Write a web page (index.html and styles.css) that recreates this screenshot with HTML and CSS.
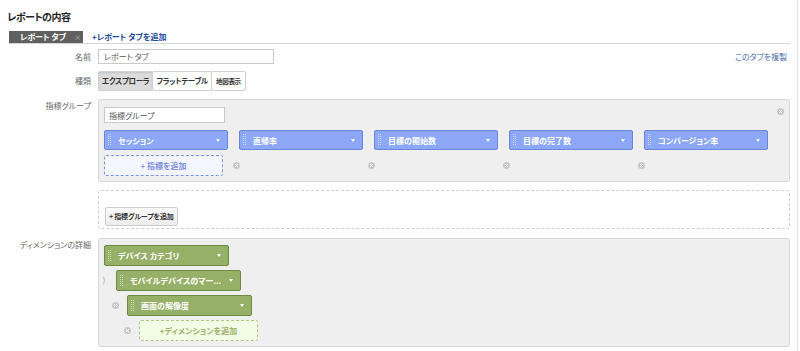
FILE: index.html
```html
<!DOCTYPE html>
<html lang="ja">
<head>
<meta charset="utf-8">
<title>レポートの内容</title>
<link rel="stylesheet" href="styles.css">
</head>
<body>
<div class="page">
  <h1 class="title">レポートの内容</h1>
  <div class="tabs">
    <div class="tab"><span>レポート タブ</span><span class="tab-x">×</span></div>
    <a class="add-tab">+レポート タブを追加</a>
  </div>

  <div class="form">
    <div class="label label-mid">名前</div>
    <div class="field name-field">
      <div class="input name-input">レポート タブ</div>
      <a class="copy">このタブを複製</a>
    </div>

    <div class="label label-mid row-type">種類</div>
    <div class="field row-type">
      <div class="btngroup">
        <div class="btn sel">エクスプローラ</div>
        <div class="btn">フラットテーブル</div>
        <div class="btn small">地図表示</div>
      </div>
    </div>

    <div class="label label-top row-metrics">指標グループ</div>
    <div class="field row-metrics">
      <div class="panel metrics">
        <svg class="close panel-close" viewBox="0 0 7 7"><circle cx="3.5" cy="3.5" r="3.5"/><path d="M2 2L5 5M5 2L2 5"/></svg>
        <div class="input group-input">指標グループ</div>
        <div class="metric-grid">
          <div class="chip blue"><i class="grip"></i><span>セッション</span><i class="caret"></i></div>
          <div class="chip blue"><i class="grip"></i><span>直帰率</span><i class="caret"></i></div>
          <div class="chip blue"><i class="grip"></i><span>目標の開始数</span><i class="caret"></i></div>
          <div class="chip blue"><i class="grip"></i><span>目標の完了数</span><i class="caret"></i></div>
          <div class="chip blue"><i class="grip"></i><span>コンバージョン率</span><i class="caret"></i></div>
          <div class="add-box blue-add">+ 指標を追加</div>
          <svg class="close col-close" viewBox="0 0 7 7"><circle cx="3.5" cy="3.5" r="3.5"/><path d="M2 2L5 5M5 2L2 5"/></svg>
          <svg class="close col-close" viewBox="0 0 7 7"><circle cx="3.5" cy="3.5" r="3.5"/><path d="M2 2L5 5M5 2L2 5"/></svg>
          <svg class="close col-close" viewBox="0 0 7 7"><circle cx="3.5" cy="3.5" r="3.5"/><path d="M2 2L5 5M5 2L2 5"/></svg>
          <svg class="close col-close" viewBox="0 0 7 7"><circle cx="3.5" cy="3.5" r="3.5"/><path d="M2 2L5 5M5 2L2 5"/></svg>
        </div>
      </div>
    </div>

    <div class="label row-addgroup"></div>
    <div class="field row-addgroup">
      <div class="dashed-panel">
        <div class="plain-btn">+ 指標グループを追加</div>
      </div>
    </div>

    <div class="label label-top row-dims">ディメンションの詳細</div>
    <div class="field row-dims">
      <div class="panel dims">
        <div class="dim-row lvl1">
          <div class="chip green"><i class="grip"></i><span>デバイス カテゴリ</span><i class="caret"></i></div>
        </div>
        <div class="dim-row lvl2">
          <svg class="chev" viewBox="0 0 7 9"><path d="M2 1Q5 4.5 2 8"/></svg>
          <div class="chip green"><i class="grip"></i><span>モバイルデバイスのマー...</span><i class="caret"></i></div>
        </div>
        <div class="dim-row lvl3">
          <svg class="close" viewBox="0 0 7 7"><circle cx="3.5" cy="3.5" r="3.5"/><path d="M2 2L5 5M5 2L2 5"/></svg>
          <div class="chip green"><i class="grip"></i><span>画面の解像度</span><i class="caret"></i></div>
        </div>
        <div class="dim-row lvl4">
          <svg class="close" viewBox="0 0 7 7"><circle cx="3.5" cy="3.5" r="3.5"/><path d="M2 2L5 5M5 2L2 5"/></svg>
          <div class="add-box green-add">+ディメンションを追加</div>
        </div>
      </div>
    </div>
  </div>
</div>
</body>
</html>
```

FILE: styles.css
```css
html, body {
  margin: 0;
  padding: 0;
  background: #fff;
}
body {
  font-family: "Noto Sans CJK JP", "Noto Sans", sans-serif;
  font-feature-settings: "palt";
  color: #333;
}
.page {
  width: 798px;
  height: 351px;
  border-right: 1px solid #e4e4e4;
  box-sizing: border-box;
  overflow: hidden;
}
.title {
  margin: 0;
  padding: 10px 0 0 7px;
  font-size: 10px;
  letter-spacing: -0.5px;
  line-height: 14px;
  font-weight: bold;
  color: #222;
}
.tabs {
  margin: 7px 0 0 9px;
  width: 781px;
  height: 12px;
  display: flex;
  align-items: stretch;
  border-bottom: 1px solid #d6d6d6;
}
.tab {
  width: 74px;
  box-sizing: border-box;
  padding-left: 11px;
  background: #606060;
  color: #fff;
  font-size: 8px;
  line-height: 12px;
  font-weight: bold;
  display: flex;
  white-space: nowrap;
}
.tab-x {
  margin-left: 8px;
  color: #bdbdbd;
  font-weight: normal;
  font-size: 7px;
}
.add-tab {
  margin-left: 9px;
  color: #1f4c9c;
  font-size: 8px;
  line-height: 12px;
  font-weight: bold;
}
.form {
  display: grid;
  grid-template-columns: 91px 692px;
  column-gap: 7px;
  margin-top: 5px;
}
.label {
  text-align: right;
  font-size: 8px;
  color: #666;
  line-height: 12px;
}
.label-mid {
  align-self: center;
}
.label-top {
  padding-top: 1px;
}
.field {
  display: flex;
}
.name-field {
  align-items: center;
  justify-content: space-between;
}
.input {
  box-sizing: border-box;
  border: 1px solid #c9c9c9;
  background: #fff;
  font-size: 8px;
  color: #555;
  padding-left: 5px;
  display: flex;
  align-items: center;
}
.name-input {
  width: 176px;
  height: 15px;
}
.copy {
  margin-right: 3px;
  font-size: 8px;
  color: #4a6ea6;
}
.row-type {
  margin-top: 7px;
}
.btngroup {
  display: flex;
  height: 20px;
}
.btn {
  box-sizing: border-box;
  height: 20px;
  border: 1px solid #d0d0d0;
  border-radius: 2px;
  background: #fff;
  font-size: 7.5px;
  letter-spacing: -0.3px;
  font-weight: bold;
  line-height: 18px;
  color: #333;
  padding: 0 3px;
  margin-right: -1px;
  white-space: nowrap;
}
.btn.sel {
  background: #dcdcdc;
  box-shadow: inset 0 1px 2px rgba(0,0,0,0.12);
}
.btn.small {
  font-size: 6.5px;
  padding: 0 4px;
}
.row-metrics {
  margin-top: 8px;
}
.panel {
  position: relative;
  width: 692px;
  box-sizing: border-box;
  background: #efefef;
  border: 1px solid #d8d8d8;
  border-radius: 3px;
}
.metrics {
  padding: 7px 0 5px 5px;
}
.panel-close {
  position: absolute;
  top: 8px;
  right: 5px;
}
.close {
  width: 7px;
  height: 7px;
  flex: none;
}
.close circle {
  fill: #c8c8c8;
}
.close path {
  stroke: #fff;
  stroke-width: 1;
}
.group-input {
  width: 121px;
  height: 16px;
  padding-left: 4px;
}
.metric-grid {
  margin-top: 7px;
  display: grid;
  grid-template-columns: repeat(5, 124px);
  column-gap: 11px;
  row-gap: 5px;
}
.chip {
  box-sizing: border-box;
  height: 20px;
  border-radius: 2px;
  color: #fff;
  font-size: 8px;
  font-weight: bold;
  display: flex;
  align-items: center;
  padding-left: 3px;
  white-space: nowrap;
}
.chip.blue {
  background: #8ba7f6;
  border: 1px solid #6b85d6;
}
.chip.green {
  width: 125px;
  height: 21px;
  background: #97b068;
  border: 1px solid #6f8a46;
}
.grip {
  flex: none;
  width: 3px;
  height: 12px;
  margin-right: 7px;
  background:
    linear-gradient(rgba(255,255,255,0.55) 50%, transparent 50%) 0 0 / 1px 2px repeat-y,
    linear-gradient(rgba(255,255,255,0.55) 50%, transparent 50%) 2px 0 / 1px 2px repeat-y;
}
.caret {
  flex: none;
  margin-left: auto;
  margin-right: 7px;
  width: 0;
  height: 0;
  border-left: 2.5px solid transparent;
  border-right: 2.5px solid transparent;
  border-top: 3px solid #fff;
}
.add-box {
  box-sizing: border-box;
  height: 21px;
  width: 119px;
  border-radius: 2px;
  font-size: 8px;
  font-weight: bold;
  display: flex;
  align-items: center;
  justify-content: center;
}
.blue-add {
  border: 1px dashed #7d95e6;
  background: #f4f6ff;
  color: #7d92dc;
}
.green-add {
  border: 1px dashed #b3c585;
  background: #f3fce5;
  color: #9ab26c;
}
.col-close {
  align-self: center;
  margin-left: -6px;
}
.row-addgroup {
  margin-top: 8px;
}
.dashed-panel {
  width: 692px;
  height: 39px;
  box-sizing: border-box;
  border: 1px dashed #cfcfcf;
  border-radius: 3px;
  padding: 9px 0 0 6px;
}
.plain-btn {
  display: inline-flex;
  align-items: center;
  box-sizing: border-box;
  height: 19px;
  padding: 0 3px;
  border: 1px solid #cbcbcb;
  border-radius: 2px;
  background: linear-gradient(#fafafa, #ececec);
  font-size: 7px;
  letter-spacing: -0.2px;
  font-weight: bold;
  color: #333;
  white-space: nowrap;
}
.row-dims {
  margin-top: 9px;
}
.dims {
  padding: 6px 0 5px 5px;
  display: flex;
  flex-direction: column;
  gap: 4px;
}
.dim-row {
  display: flex;
  align-items: center;
  gap: 8px;
}
.lvl2 {
  margin-left: -3px;
}
.lvl3 {
  margin-left: 8px;
}
.lvl4 {
  margin-left: 20px;
}
.chev {
  width: 7px;
  height: 9px;
  flex: none;
}
.chev path {
  fill: none;
  stroke: #c4c4c4;
  stroke-width: 1.2;
}
```
